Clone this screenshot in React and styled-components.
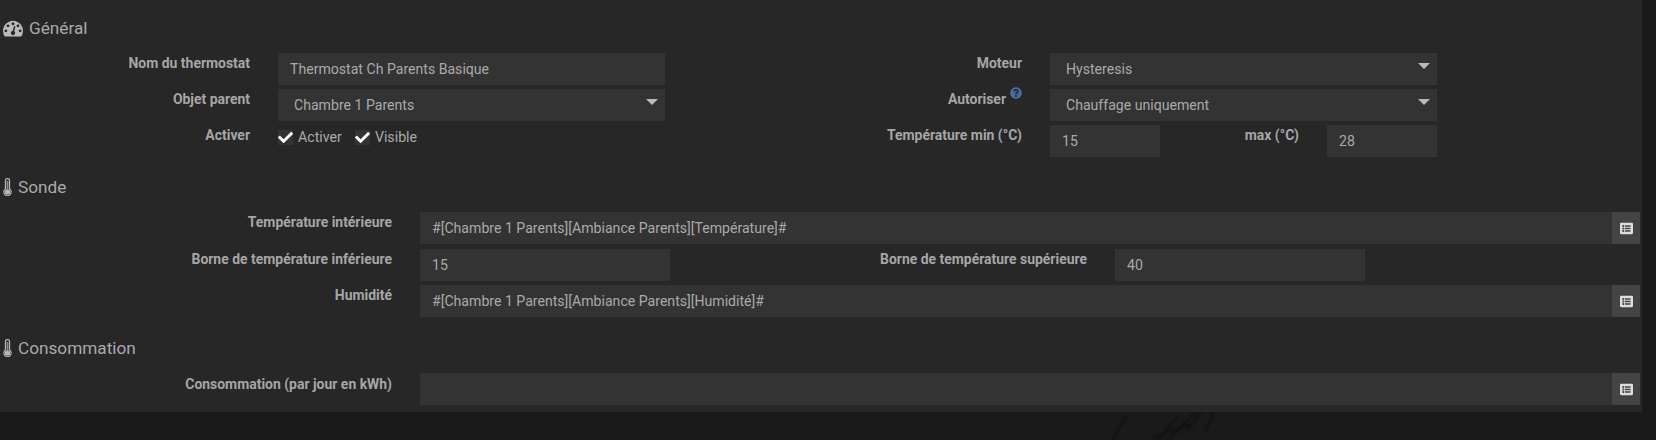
import React from 'react';
import styled, { createGlobalStyle } from 'styled-components';
import { FaCheck, FaListAlt, FaQuestionCircle } from 'react-icons/fa';

const GlobalStyle = createGlobalStyle`
  html, body {
    margin: 0;
    padding: 0;
    background: #1a1a1a;
  }
  body {
    font-family: Roboto, "Liberation Sans", sans-serif;
    font-size: 14px;
    color: #aaa;
    overflow: hidden;
  }
`;

const Page = styled.div`
  position: relative;
  width: 1656px;
  height: 440px;
  overflow: hidden;
`;

const Backdrop = styled.svg`
  position: absolute;
  left: 1080px;
  top: 408px;
  filter: blur(1px);
`;

const Panel = styled.div`
  position: relative;
  box-sizing: border-box;
  width: 1642px;
  height: 412px;
  padding: 18px 2px 0 0;
  background: #272727;
`;

const Legend = styled.div`
  display: flex;
  align-items: center;
  gap: ${props => props.$gap}px;
  height: 20px;
  padding-left: 3px;
  margin-bottom: ${props => props.$after}px;
  font-size: 17.2px;
  color: #aaa;
`;

const GaugeIcon = styled.svg`
  width: 20px;
  height: 20px;
  fill: #bbb;
`;

const ThermoIcon = styled.svg`
  width: 9px;
  height: 18px;
`;

const FormGrid = styled.div`
  display: grid;
  grid-template-columns: 250px 387px 329px 387px;
  column-gap: 28px;
  row-gap: 4px;
  margin-bottom: ${props => props.$after}px;
`;

const Stack = styled.div`
  display: flex;
  flex-direction: column;
  margin-bottom: ${props => props.$after}px;
`;

const Row = styled.div`
  display: grid;
  grid-template-columns: 392px 1fr;
  column-gap: 28px;
  margin-bottom: ${props => props.$after || 0}px;
`;

const Label = styled.label`
  display: block;
  padding-top: ${props => props.$top || 1}px;
  font-size: 13.95px;
  font-weight: 700;
  line-height: 18px;
  text-align: right;
  color: #a6a6a6;
  white-space: nowrap;
`;

const Input = styled.div`
  box-sizing: border-box;
  flex: ${props => (props.$width ? `0 0 ${props.$width}px` : '1')};
  height: 32px;
  padding: ${props => (props.$select ? '0 16px' : '0 12px')};
  line-height: 32px;
  font-size: 14.1px;
  background: #333;
  color: #aaa;
  position: relative;
  &::after {
    content: ${props => (props.$select ? '""' : 'none')};
    position: absolute;
    right: 7px;
    top: 10px;
    border-left: 6px solid transparent;
    border-right: 6px solid transparent;
    border-top: 6px solid #bbb;
  }
`;

const SplitField = styled.div`
  display: flex;
`;

const InlineLabel = styled(Label)`
  flex: 1;
  margin-right: 28px;
`;

const Spacer = styled.div`
  flex: 0 0 ${props => props.$width}px;
`;

const Checks = styled.div`
  display: flex;
  align-items: center;
  height: 32px;
  padding-bottom: 8px;
  box-sizing: border-box;
`;

const CheckItem = styled.span`
  display: inline-flex;
  align-items: center;
  gap: 5px;
  margin-right: 13px;
  font-size: 14.2px;
  color: #aaa;
`;

const CheckBox = styled.span`
  display: inline-flex;
  align-items: center;
  justify-content: center;
  width: 15px;
  height: 15px;
  background: #333;
  color: #fff;
  font-size: 15px;
`;

const AddonGroup = styled.div`
  display: flex;
`;

const Addon = styled.span`
  flex: 0 0 28px;
  display: flex;
  align-items: center;
  justify-content: center;
  height: 32px;
  background: #444;
  color: #ddd;
  font-size: 13px;
`;

const Help = styled.span`
  position: relative;
  top: -5px;
  margin-left: 4px;
  font-size: 12px;
  color: #4a6ca0;
`;

function Gauge() {
  return (
    <GaugeIcon viewBox="0 0 1792 1792">
      <path d="M384 1152q0-53-37.5-90.5t-90.5-37.5-90.5 37.5-37.5 90.5 37.5 90.5 90.5 37.5 90.5-37.5 37.5-90.5zm192-448q0-53-37.5-90.5t-90.5-37.5-90.5 37.5-37.5 90.5 37.5 90.5 90.5 37.5 90.5-37.5 37.5-90.5zm428 481l101-382q6-26-7.5-48.5t-38.5-29.5-48 6.5-30 39.5l-101 382q-60 5-107 43.5t-63 98.5q-20 77 20 146t117 89 146-20 89-117q16-60-6-117t-72-91zm660-33q0-53-37.5-90.5t-90.5-37.5-90.5 37.5-37.5 90.5 37.5 90.5 90.5 37.5 90.5-37.5 37.5-90.5zm-640-640q0-53-37.5-90.5t-90.5-37.5-90.5 37.5-37.5 90.5 37.5 90.5 90.5 37.5 90.5-37.5 37.5-90.5zm448 192q0-53-37.5-90.5t-90.5-37.5-90.5 37.5-37.5 90.5 37.5 90.5 90.5 37.5 90.5-37.5 37.5-90.5zm320 448q0 261-141 483-19 29-54 29h-1402q-35 0-54-29-141-221-141-483 0-182 71-348t191-286 286-191 348-71 348 71 286 191 191 286 71 348z" />
    </GaugeIcon>
  );
}

function Thermo() {
  return (
    <ThermoIcon viewBox="0 0 9 18">
      <path
        d="M2.4 11V2.6a2.1 2.1 0 0 1 4.2 0V11a3.7 3.7 0 1 1-4.2 0z"
        fill="#333"
        stroke="#bbb"
        strokeWidth="1.1"
      />
      <circle cx="4.5" cy="14" r="2.6" fill="#bbb" />
      <rect x="3.6" y="3" width="1.8" height="9" fill="#8c8c8c" />
    </ThermoIcon>
  );
}

function Check({ children }) {
  return (
    <CheckItem>
      <CheckBox><FaCheck /></CheckBox>
      {children}
    </CheckItem>
  );
}

function CmdInput({ value }) {
  return (
    <AddonGroup>
      <Input>{value}</Input>
      <Addon><FaListAlt /></Addon>
    </AddonGroup>
  );
}

export default function App() {
  return (
    <Page>
      <GlobalStyle />
      <Backdrop width="180" height="32" viewBox="0 0 180 32" fill="none" stroke="#111" strokeWidth="2">
        <path d="M88 32 L118 2" />
        <path d="M78 32 L97 10" />
        <path d="M106 24 L121 4" />
        <path d="M125 24 L134 4" />
        <path d="M72 30 L114 15" />
        <path d="M32 32 L46 8" />
      </Backdrop>
      <Panel>
        <Legend $gap={6} $after={15}>
          <Gauge />
          <span>Général</span>
        </Legend>
        <FormGrid $after={20}>
          <Label>Nom du thermostat</Label>
          <Input>Thermostat Ch Parents Basique</Input>
          <Label>Moteur</Label>
          <Input $select>Hysteresis</Input>

          <Label>Objet parent</Label>
          <Input $select>Chambre 1 Parents</Input>
          <Label>
            Autoriser
            <Help><FaQuestionCircle /></Help>
          </Label>
          <Input $select>Chauffage uniquement</Input>

          <Label>Activer</Label>
          <Checks>
            <Check>Activer</Check>
            <Check>Visible</Check>
          </Checks>
          <Label>Température min (°C)</Label>
          <SplitField>
            <Input $width={110}>15</Input>
            <InlineLabel>max (°C)</InlineLabel>
            <Input $width={110}>28</Input>
          </SplitField>
        </FormGrid>

        <Legend $gap={6} $after={15}>
          <Thermo />
          <span>Sonde</span>
        </Legend>
        <Stack $after={21}>
          <Row $after={5}>
            <Label>Température intérieure</Label>
            <CmdInput value="#[Chambre 1 Parents][Ambiance Parents][Température]#" />
          </Row>
          <Row $after={4}>
            <Label>Borne de température inférieure</Label>
            <SplitField>
              <Input $width={250}>15</Input>
              <InlineLabel>Borne de température supérieure</InlineLabel>
              <Input $width={250}>40</Input>
              <Spacer $width={275} />
            </SplitField>
          </Row>
          <Row>
            <Label>Humidité</Label>
            <CmdInput value="#[Chambre 1 Parents][Ambiance Parents][Humidité]#" />
          </Row>
        </Stack>

        <Legend $gap={6} $after={15}>
          <Thermo />
          <span>Consommation</span>
        </Legend>
        <Row>
          <Label $top={2}>Consommation (par jour en kWh)</Label>
          <CmdInput value="" />
        </Row>
      </Panel>
    </Page>
  );
}
